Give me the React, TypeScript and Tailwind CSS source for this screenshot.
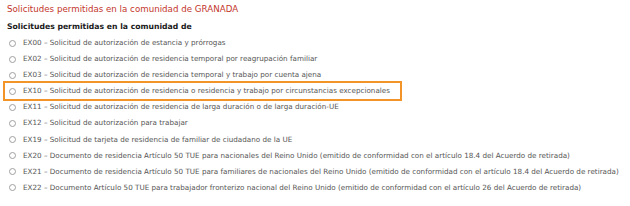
import React from "react";

const items = [
  "EX00 – Solicitud de autorización de estancia y prórrogas",
  "EX02 – Solicitud de autorización de residencia temporal por reagrupación familiar",
  "EX03 – Solicitud de autorización de residencia temporal y trabajo por cuenta ajena",
  "EX10 – Solicitud de autorización de residencia o residencia y trabajo por circunstancias excepcionales",
  "EX11 – Solicitud de autorización de residencia de larga duración o de larga duración-UE",
  "EX12 – Solicitud de autorización para trabajar",
  "EX19 – Solicitud de tarjeta de residencia de familiar de ciudadano de la UE",
  "EX20 – Documento de residencia Artículo 50 TUE para nacionales del Reino Unido (emitido de conformidad con el artículo 18.4 del Acuerdo de retirada)",
  "EX21 – Documento de residencia Artículo 50 TUE para familiares de nacionales del Reino Unido (emitido de conformidad con el artículo 18.4 del Acuerdo de retirada)",
  "EX22 – Documento Artículo 50 TUE para trabajador fronterizo nacional del Reino Unido (emitido de conformidad con el artículo 26 del Acuerdo de retirada)",
];

export default function App() {
  return (
    <div className="w-[630px] h-[206px] bg-white overflow-hidden" style={{ fontFamily: '"DejaVu Sans", Verdana, sans-serif' }}>
      <div className="pl-[7px] pt-[3px] text-[8.7px] leading-[13px] text-[#c3352b]">
        Solicitudes permitidas en la comunidad de GRANADA
      </div>
      <div className="pl-[7px] mt-[6px] text-[7.7px] leading-[10px] font-bold text-[#1a1a1a]">
        Solicitudes permitidas en la comunidad de
      </div>
      <div className="mt-[3px] flex flex-col">
        {items.map((t, i) => {
          const hl = i === 3;
          return (
            <div
              key={i}
              className={
                hl
                  ? "ml-[3px] w-[399px] h-[20px] -my-[2px] flex items-center gap-[7px] border-2 border-[#f39428] pl-[4px]"
                  : "h-[16.1px] flex items-center gap-[7px] pl-[9px]"
              }
            >
              <span className="w-[7px] h-[7px] rounded-full border border-[#a0a0a0] bg-white shrink-0" />
              <span className="text-[7.2px] leading-[10px] text-[#555555] whitespace-nowrap">{t}</span>
            </div>
          );
        })}
      </div>
    </div>
  );
}
